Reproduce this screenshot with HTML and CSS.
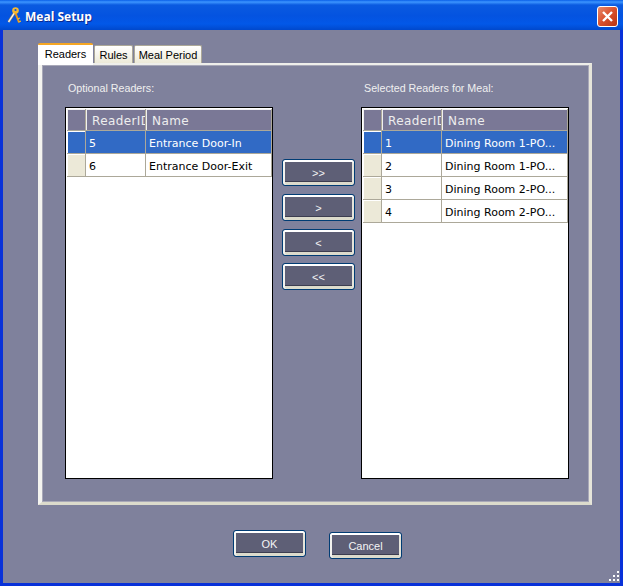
FILE: index.html
```html
<!DOCTYPE html>
<html lang="en">
<head>
    <meta charset="UTF-8">
    <title>Meal Setup</title>
    <link rel="stylesheet" href="styles.css">
</head>
<body>
    <div class="window">
        <div class="titlebar">
            <svg class="app-icon" width="14" height="17" viewBox="0 0 14 17">
                <path d="M8 5 L1.5 15" stroke="#8a7a60" stroke-width="2.6" fill="none"/>
                <path d="M8 5 L1.5 15" stroke="#f4f2ea" stroke-width="1.4" fill="none"/>
                <path d="M8.5 6 L12 15.5" stroke="#e89418" stroke-width="2" fill="none"/>
                <path d="M10.5 12 L13 11 M11.5 15 L14 14" stroke="#f6b830" stroke-width="1.2" fill="none"/>
                <circle cx="8.5" cy="3.5" r="3.3" fill="#f6b830"/>
                <circle cx="8.5" cy="3" r="1.1" fill="#0a52d8"/>
            </svg>
            <span class="title">Meal Setup</span>
            <div class="close-btn">
                <svg width="13" height="13" viewBox="0 0 13 13">
                    <path d="M2 2 L11 11 M11 2 L2 11" stroke="#fff" stroke-width="2.4" fill="none"/>
                </svg>
            </div>
        </div>

        <div class="client">
            <div class="tabs">
                <div class="tab tab-active">Readers</div>
                <div class="tab tab-rules">Rules</div>
                <div class="tab tab-period">Meal Period</div>
            </div>

            <div class="panel">
                <div class="list-col">
                    <div class="list-label">Optional Readers:</div>
                    <div class="grid">
                        <table>
                            <tr class="head">
                                <td class="rh"></td>
                                <td class="c-id"><div class="clip">ReaderID</div></td>
                                <td class="c-name">Name</td>
                            </tr>
                            <tr class="sel">
                                <td class="rh"></td>
                                <td class="c-id">5</td>
                                <td class="c-name">Entrance Door-In</td>
                            </tr>
                            <tr>
                                <td class="rh"></td>
                                <td class="c-id">6</td>
                                <td class="c-name">Entrance Door-Exit</td>
                            </tr>
                        </table>
                    </div>
                </div>

                <div class="move-btns">
                    <button class="btn">&gt;&gt;</button>
                    <button class="btn">&gt;</button>
                    <button class="btn">&lt;</button>
                    <button class="btn">&lt;&lt;</button>
                </div>

                <div class="list-col list-col-right">
                    <div class="list-label">Selected Readers for Meal:</div>
                    <div class="grid">
                        <table>
                            <tr class="head">
                                <td class="rh"></td>
                                <td class="c-id"><div class="clip">ReaderID</div></td>
                                <td class="c-name">Name</td>
                            </tr>
                            <tr class="sel">
                                <td class="rh"></td>
                                <td class="c-id">1</td>
                                <td class="c-name">Dining Room 1-PO...</td>
                            </tr>
                            <tr>
                                <td class="rh"></td>
                                <td class="c-id">2</td>
                                <td class="c-name">Dining Room 1-PO...</td>
                            </tr>
                            <tr>
                                <td class="rh"></td>
                                <td class="c-id">3</td>
                                <td class="c-name">Dining Room 2-PO...</td>
                            </tr>
                            <tr>
                                <td class="rh"></td>
                                <td class="c-id">4</td>
                                <td class="c-name">Dining Room 2-PO...</td>
                            </tr>
                        </table>
                    </div>
                </div>
            </div>

            <div class="footer">
                <button class="btn">OK</button>
                <button class="btn btn-cancel">Cancel</button>
            </div>
        </div>

        <svg class="grip" width="12" height="12" viewBox="0 0 12 12" fill="#fff">
            <rect x="9" y="0" width="2" height="2"/>
            <rect x="5" y="4" width="2" height="2"/>
            <rect x="9" y="4" width="2" height="2"/>
            <rect x="1" y="8" width="2" height="2"/>
            <rect x="5" y="8" width="2" height="2"/>
            <rect x="9" y="8" width="2" height="2"/>
        </svg>
    </div>
</body>
</html>
```

FILE: styles.css
```css
html, body {
    margin: 0;
    padding: 0;
}
body {
    width: 623px;
    height: 586px;
    overflow: hidden;
    font-family: "DejaVu Sans", sans-serif;
    font-size: 11px;
}

.window {
    position: relative;
    width: 623px;
    height: 586px;
    box-sizing: border-box;
    display: flex;
    flex-direction: column;
    background: #0831d9;
}

/* title bar */
.titlebar {
    height: 30px;
    flex: none;
    display: flex;
    align-items: center;
    padding: 0 5px 0 7px;
    background: linear-gradient(to bottom, #0a5fe8 0, #3d95ff 2px, #0a5ae0 5px, #0453e0 16px, #0258e8 24px, #0048cc 30px);
}
.app-icon {
    flex: none;
}
.title {
    margin: 3px 0 0 4px;
    color: #fff;
    font-family: "Open Sans", sans-serif;
    font-size: 12px;
    font-weight: 700;
    text-shadow: 1px 1px 0 #0a2a90;
}
.close-btn {
    margin-left: auto;
    margin-top: 3px;
    width: 19px;
    height: 19px;
    border: 1px solid #fff;
    border-radius: 3px;
    display: flex;
    align-items: center;
    justify-content: center;
    background: linear-gradient(135deg, #e88a6c, #d9502c 50%, #b83412);
}

/* dialog body */
.client {
    flex: 1;
    margin: 0 3px 3px;
    padding: 13px 31px 0 35px;
    background: #7f819c;
}

.tabs {
    display: flex;
    align-items: flex-end;
    height: 22px;
    margin-bottom: -2px;
    position: relative;
    z-index: 1;
}
.tab {
    box-sizing: border-box;
    height: 18px;
    margin-bottom: 2px;
    padding-top: 3px;
    text-align: center;
    color: #000;
    background: linear-gradient(to bottom, #fff, #ece9d8);
    border: 1px solid #aca899;
    border-bottom: 0;
    border-radius: 2px 2px 0 0;
    font-family: "Liberation Sans", sans-serif;
    font-size: 11px;
}
.tab-active {
    width: 55px;
    height: 22px;
    margin-bottom: 0;
    background: #fff;
    border: 0;
    border-top: 2px solid #f5a623;
    padding-top: 3px;
}
.tab-rules {
    width: 39px;
    margin-left: 1px;
}
.tab-period {
    width: 68px;
    margin-left: 1px;
}

.panel {
    box-sizing: border-box;
    width: 554px;
    height: 442px;
    display: flex;
    padding: 17px 0 0 23px;
    border-style: solid;
    border-width: 2px 3px 3px 4px;
    border-color: #eeeeea #e6e5da #dcdbcc #f4f4f0;
    box-shadow: inset 1px 1px 0 #a8a8b8, inset -1px -1px 0 #a8a8b8;
}

.list-col {
    width: 208px;
    flex: none;
}
.list-col-right {
    margin-left: 6px;
}
.list-label {
    height: 25px;
    padding-left: 3px;
    color: #f0f0f0;
    font-family: "Liberation Sans", sans-serif;
    font-size: 10.7px;
    line-height: 13px;
}
.grid {
    box-sizing: border-box;
    height: 372px;
    border: 1px solid #000;
    padding: 1px 0 0 1px;
    background: #fff;
}
table {
    table-layout: fixed;
    width: 205px;
    border-collapse: separate;
    border-spacing: 0;
}
td {
    box-sizing: border-box;
    height: 23px;
    padding: 2px 0 0 3px;
    border-right: 1px solid #aca899;
    border-bottom: 1px solid #aca899;
    white-space: nowrap;
    color: #000;
    font-size: 11px;
}
.rh {
    width: 19px;
    padding: 0;
    background: #ece9d8;
    box-shadow: inset 1px 1px 0 #fff;
}
.c-id {
    width: 60px;
}
.c-name {
    width: 126px;
}

.head td {
    height: 22px;
    padding: 2px 0 0 6px;
    color: #eeeeee;
    background: #7a7896;
    box-shadow: inset 1px 1px 0 #f0f0f0;
    font-size: 12px;
    letter-spacing: 0.4px;
}
.head .rh {
    padding: 0;
}
.clip {
    overflow: hidden;
}
.sel td {
    color: #fff;
    background: #316ac5;
}

/* buttons */
.btn {
    box-sizing: border-box;
    width: 73px;
    height: 27px;
    padding: 0;
    border: 1px solid #003c74;
    border-radius: 3px;
    background: #5e5f76;
    color: #f4f4f4;
    font-family: "Liberation Sans", sans-serif;
    font-size: 11px;
    box-shadow: inset 0 2px 0 #fff, inset 2px 0 0 #f2f2ee, inset -2px 0 0 #e6e5da, inset 0 -3px 0 #dcdbcc, inset 0 -4px 0 #3c3d50;
}
.move-btns {
    width: 73px;
    flex: none;
    margin: 77px 0 0 9px;
    display: flex;
    flex-direction: column;
    gap: 8px;
}
.move-btns .btn:last-child {
    margin-top: -1px;
}
.footer {
    display: flex;
    align-items: flex-start;
    gap: 23px;
    margin: 25px 0 0 195px;
}
.btn-cancel {
    margin-top: 2px;
}

.grip {
    position: absolute;
    right: 3px;
    bottom: 3px;
}
```
